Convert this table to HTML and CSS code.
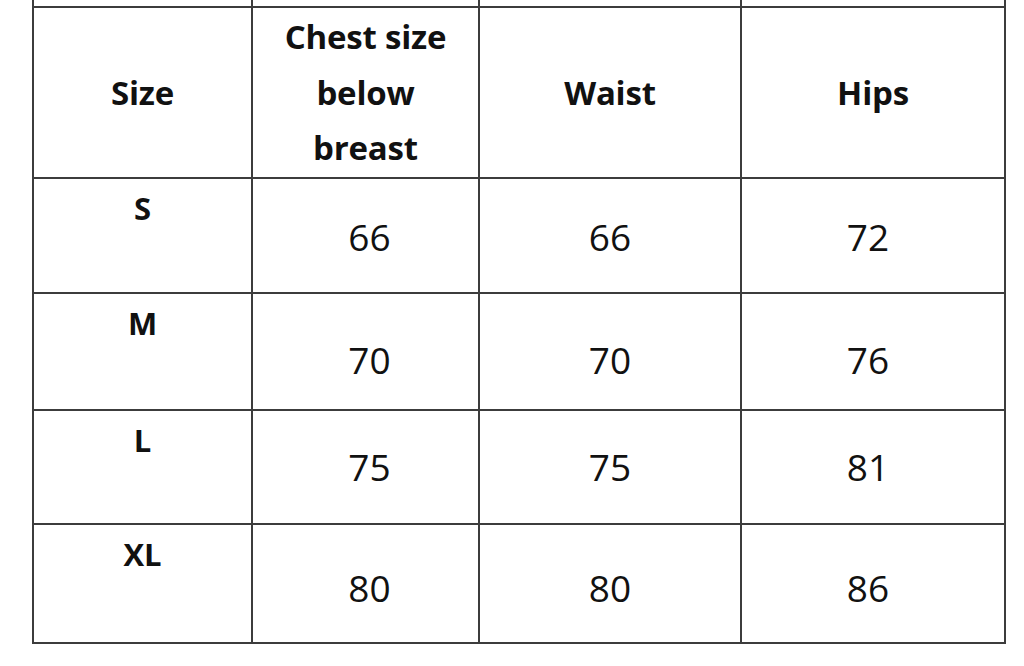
FILE: index.html
```html
<!DOCTYPE html>
<html lang="en">
<head>
<meta charset="utf-8">
<title>Size chart</title>
<link rel="stylesheet" href="styles.css">
</head>
<body>
<div class="chart">
  <div class="cell stub"></div>
  <div class="cell stub"></div>
  <div class="cell stub"></div>
  <div class="cell stub"></div>

  <div class="cell head">Size</div>
  <div class="cell head">Chest size<br>below<br>breast</div>
  <div class="cell head">Waist</div>
  <div class="cell head">Hips</div>

  <div class="cell label">S</div>
  <div class="cell num c-chest r-s">66</div>
  <div class="cell num r-s">66</div>
  <div class="cell num c-hips r-s">72</div>

  <div class="cell label">M</div>
  <div class="cell num c-chest r-m">70</div>
  <div class="cell num r-m">70</div>
  <div class="cell num c-hips r-m">76</div>

  <div class="cell label">L</div>
  <div class="cell num c-chest r-l">75</div>
  <div class="cell num r-l">75</div>
  <div class="cell num c-hips r-l">81</div>

  <div class="cell label">XL</div>
  <div class="cell num c-chest r-xl">80</div>
  <div class="cell num r-xl">80</div>
  <div class="cell num c-hips r-xl">86</div>
</div>
</body>
</html>
```

FILE: styles.css
```css
html, body {
  margin: 0;
  padding: 0;
  background: #ffffff;
}

body {
  width: 1024px;
  height: 666px;
  overflow: hidden;
  font-family: "Open Sans", "DejaVu Sans", sans-serif;
  color: #111111;
}

.chart {
  display: grid;
  grid-template-columns: 219px 227px 262px 264px;
  grid-template-rows: 8px 171px 115px 117px 114px 119px;
  margin-left: 32px;
  width: max-content;
  border-left: 2px solid #3c3c3c;
}

.cell {
  box-sizing: border-box;
  border-right: 2px solid #3c3c3c;
  border-bottom: 2px solid #3c3c3c;
  display: flex;
  justify-content: center;
  text-align: center;
}

.head {
  align-items: center;
  font-weight: 700;
  font-size: 33px;
  line-height: 55.5px;
  letter-spacing: -0.2px;
}

.label {
  align-items: flex-start;
  font-weight: 700;
  font-size: 31px;
  line-height: 40px;
  padding-top: 9px;
}

.num {
  align-items: center;
  font-weight: 400;
  font-size: 37px;
  line-height: 44px;
}

.c-chest { padding-left: 8px; }
.c-hips { padding-right: 10px; }

.r-s { padding-top: 3px; }
.r-m { padding-top: 17px; }
.r-l { padding-top: 0; }
.r-xl { padding-top: 8px; }
```
